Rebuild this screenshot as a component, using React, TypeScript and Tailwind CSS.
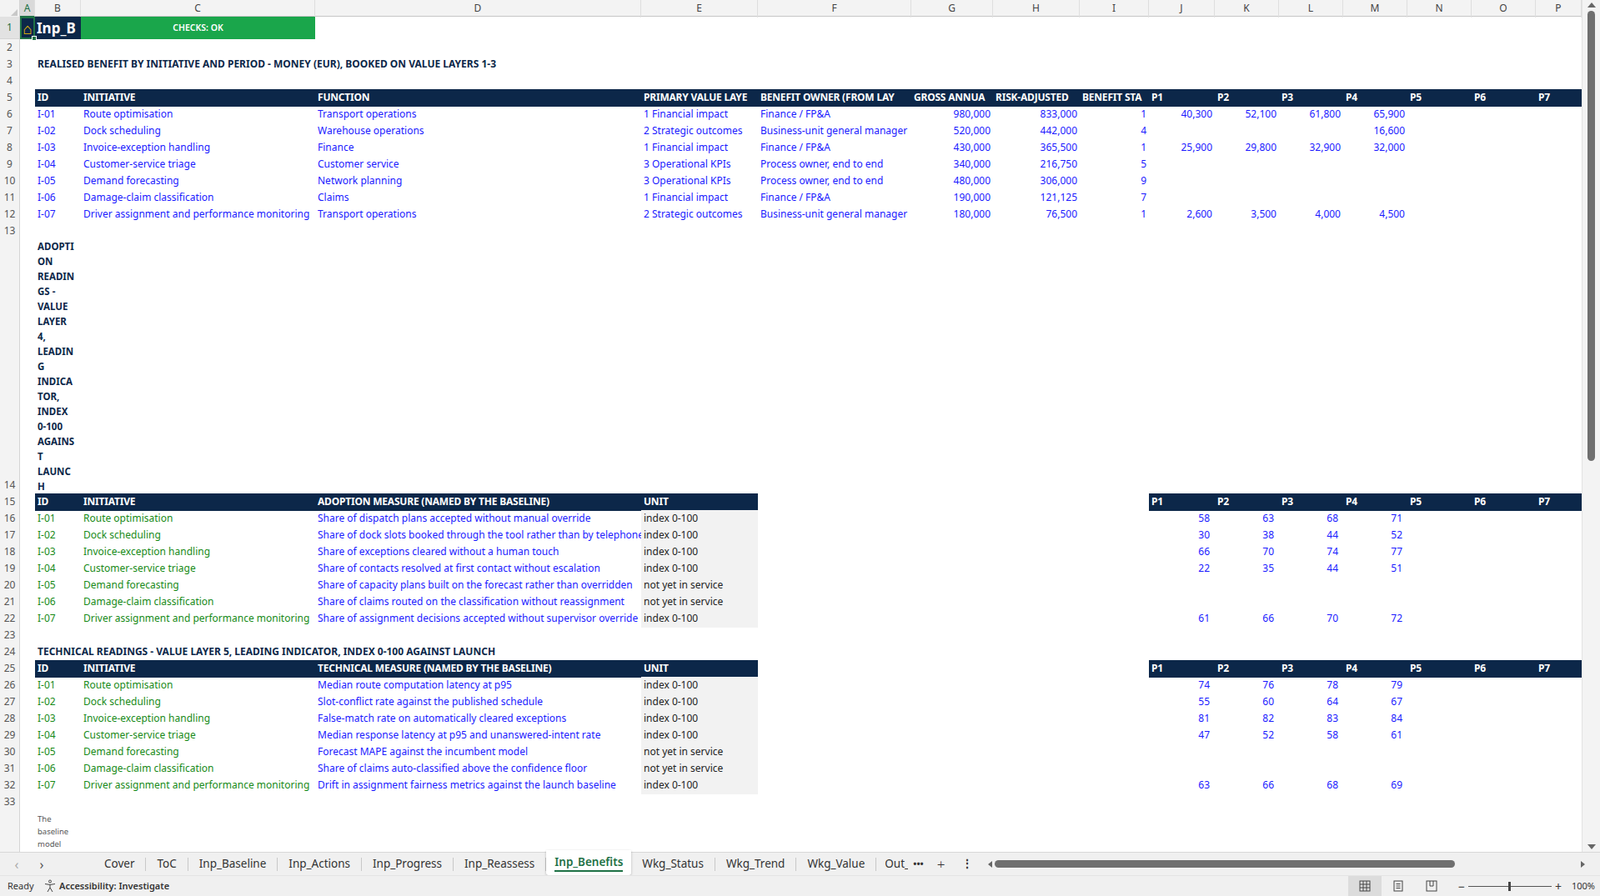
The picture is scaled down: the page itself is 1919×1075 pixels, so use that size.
import React from "react";

const GRID =
  "grid grid-cols-[24px_18px_55px_281px_391px_140px_184px_98px_104px_83px_79px_77px_77px_77px_77px_77px_55px]";
const BASE = "overflow-hidden whitespace-nowrap px-[3px] text-[12px] leading-[20px] font-['Lato',sans-serif]";
const HD = "overflow-hidden whitespace-nowrap px-[3px] bg-[#0c2749] text-white font-bold text-[11px] leading-[20px] font-['Open_Sans',sans-serif] tracking-[-0.2px]";
const BLUE = "text-[#1a1aff]";
const GREEN = "text-[#178a17]";
const UNIT = "bg-[#f2f2f2] text-[#222]";

type C = { t?: React.ReactNode; k?: string };

function RowNum({ n }: { n: string }) {
  return (
    <div className="flex items-end justify-center border-r border-b border-[#d4d4d4] bg-[#f3f3f3] text-[12px] leading-[20px] font-['Noto_Sans',sans-serif] text-[#555]">
      {n}
    </div>
  );
}

function Row({ n, cells, h = "h-[20px]" }: { n: string; cells: C[]; h?: string }) {
  const full: C[] = [...cells];
  while (full.length < 16) full.push({});
  return (
    <div className={`${GRID} ${h}`}>
      <RowNum n={n} />
      {full.map((c, i) => (
        <div key={i} className={`${BASE} ${c.k ?? ""}`}>
          {c.t}
        </div>
      ))}
    </div>
  );
}

const t1 = [
  ["I-01", "Route optimisation", "Transport operations", "1 Financial impact", "Finance / FP&A", "980,000", "833,000", "1", "40,300", "52,100", "61,800", "65,900"],
  ["I-02", "Dock scheduling", "Warehouse operations", "2 Strategic outcomes", "Business-unit general manager", "520,000", "442,000", "4", "", "", "", "16,600"],
  ["I-03", "Invoice-exception handling", "Finance", "1 Financial impact", "Finance / FP&A", "430,000", "365,500", "1", "25,900", "29,800", "32,900", "32,000"],
  ["I-04", "Customer-service triage", "Customer service", "3 Operational KPIs", "Process owner, end to end", "340,000", "216,750", "5", "", "", "", ""],
  ["I-05", "Demand forecasting", "Network planning", "3 Operational KPIs", "Process owner, end to end", "480,000", "306,000", "9", "", "", "", ""],
  ["I-06", "Damage-claim classification", "Claims", "1 Financial impact", "Finance / FP&A", "190,000", "121,125", "7", "", "", "", ""],
  ["I-07", "Driver assignment and performance monitoring", "Transport operations", "2 Strategic outcomes", "Business-unit general manager", "180,000", "76,500", "1", "2,600", "3,500", "4,000", "4,500"],
];

const ids = ["I-01", "I-02", "I-03", "I-04", "I-05", "I-06", "I-07"];
const inits = ["Route optimisation", "Dock scheduling", "Invoice-exception handling", "Customer-service triage", "Demand forecasting", "Damage-claim classification", "Driver assignment and performance monitoring"];
const adopt = [
  "Share of dispatch plans accepted without manual override",
  "Share of dock slots booked through the tool rather than by telephone",
  "Share of exceptions cleared without a human touch",
  "Share of contacts resolved at first contact without escalation",
  "Share of capacity plans built on the forecast rather than overridden",
  "Share of claims routed on the classification without reassignment",
  "Share of assignment decisions accepted without supervisor override",
];
const tech = [
  "Median route computation latency at p95",
  "Slot-conflict rate against the published schedule",
  "False-match rate on automatically cleared exceptions",
  "Median response latency at p95 and unanswered-intent rate",
  "Forecast MAPE against the incumbent model",
  "Share of claims auto-classified above the confidence floor",
  "Drift in assignment fairness metrics against the launch baseline",
];
const units = ["index 0-100", "index 0-100", "index 0-100", "index 0-100", "not yet in service", "not yet in service", "index 0-100"];
const aVals = [["58", "63", "68", "71"], ["30", "38", "44", "52"], ["66", "70", "74", "77"], ["22", "35", "44", "51"], [], [], ["61", "66", "70", "72"]];
const tVals = [["74", "76", "78", "79"], ["55", "60", "64", "67"], ["81", "82", "83", "84"], ["47", "52", "58", "61"], [], [], ["63", "66", "68", "69"]];

function periodHeads(): C[] {
  return ["P1", "P2", "P3", "P4", "P5", "P6", "P7"].map((p) => ({ t: p, k: HD }));
}

function SubTable({ start, measure, descs, vals }: { start: number; measure: string; descs: string[]; vals: string[][] }) {
  return (
    <>
      <Row
        n={String(start)}
        cells={[
          {},
          { t: "ID", k: HD },
          { t: "INITIATIVE", k: HD },
          { t: measure, k: HD },
          { t: "UNIT", k: HD },
          {}, {}, {}, {},
          ...periodHeads(),
        ]}
      />
      {ids.map((id, i) => (
        <Row
          key={id}
          n={String(start + 1 + i)}
          cells={[
            {},
            { t: id, k: GREEN },
            { t: inits[i], k: GREEN },
            { t: descs[i], k: BLUE },
            { t: units[i], k: UNIT },
            {}, {}, {}, {},
            ...[0, 1, 2, 3].map((j) => ({ t: vals[i][j] ?? "", k: `${BLUE} text-right pr-[6px]` })),
          ]}
        />
      ))}
    </>
  );
}

const colLetters = ["A", "B", "C", "D", "E", "F", "G", "H", "I", "J", "K", "L", "M", "N", "O", "P"];
const titleLines = ["ADOPTI", "ON", "READIN", "GS -", "VALUE", "LAYER", "4,", "LEADIN", "G", "INDICA", "TOR,", "INDEX", "0-100", "AGAINS", "T", "LAUNC", "H"];
const TITLE = "font-bold text-[11.5px] text-[#0c2749] font-['Open_Sans',sans-serif]";

export default function App() {
  return (
    <div className="w-[1919px] h-[1075px] flex flex-col bg-white overflow-hidden select-none">
      <div className="flex h-[1022px]">
        <div className="flex-1 overflow-hidden">
          <div className={`${GRID} h-[20px] bg-[#f3f3f3] border-b border-[#c6c6c6]`}>
            <div className="border-r border-[#d4d4d4] bg-[#f3f3f3] flex items-end justify-end">
              <div className="w-0 h-0 border-l-[8px] border-l-transparent border-b-[8px] border-b-[#c8c8c8] m-[2px]" />
            </div>
            {colLetters.map((l) => (
              <div
                key={l}
                className={`text-center text-[12px] leading-[19px] font-['Noto_Sans',sans-serif] border-r border-[#dedede] ${
                  l === "A" ? "bg-[#d9d9d9] text-[#1e7145] border-b-2 border-b-[#1e7145]" : "text-[#444]"
                }`}
              >
                {l}
              </div>
            ))}
          </div>
          <div className={`${GRID} h-[27px]`}>
            <div className="flex items-center justify-center border-r border-b border-[#d4d4d4] bg-[#e2e2e2] text-[12px] text-[#1e7145] font-['Noto_Sans',sans-serif]">1</div>
            <div className="relative bg-[#0c2749] border-2 border-[#1e7145] flex items-center justify-center text-[#f2c200] text-[18px] leading-none">
              ⌂
              <div className="absolute -right-[4px] -bottom-[4px] w-[6px] h-[6px] bg-[#1e7145] border border-white" />
            </div>
            <div className="bg-[#0c2749] text-white font-bold text-[17px] leading-[27px] pl-[2px] overflow-hidden whitespace-nowrap font-['Open_Sans',sans-serif]">
              Inp_B
            </div>
            <div className="bg-[#1aa64b] text-white text-[10.5px] font-semibold flex items-center justify-center font-['Open_Sans',sans-serif]">
              CHECKS: OK
            </div>
          </div>
          <Row n="2" cells={[]} />
          <Row
            n="3"
            cells={[{}, { t: "REALISED BENEFIT BY INITIATIVE AND PERIOD - MONEY (EUR), BOOKED ON VALUE LAYERS 1-3", k: `${TITLE} overflow-visible` }]}
          />
          <Row n="4" cells={[]} />
          <Row
            n="5"
            cells={[
              {},
              { t: "ID", k: HD },
              { t: "INITIATIVE", k: HD },
              { t: "FUNCTION", k: HD },
              { t: "PRIMARY VALUE LAYE", k: HD },
              { t: "BENEFIT OWNER (FROM LAY", k: HD },
              { t: "GROSS ANNUA", k: HD },
              { t: "RISK-ADJUSTED", k: HD },
              { t: "BENEFIT STA", k: HD },
              ...periodHeads(),
            ]}
          />
          {t1.map((r, i) => (
            <Row
              key={r[0]}
              n={String(6 + i)}
              cells={[
                {},
                { t: r[0], k: BLUE },
                { t: r[1], k: BLUE },
                { t: r[2], k: BLUE },
                { t: r[3], k: BLUE },
                { t: r[4], k: BLUE },
                { t: r[5], k: `${BLUE} text-right` },
                { t: r[6], k: `${BLUE} text-right` },
                { t: r[7], k: `${BLUE} text-right` },
                { t: r[8], k: `${BLUE} text-right` },
                { t: r[9], k: `${BLUE} text-right` },
                { t: r[10], k: `${BLUE} text-right` },
                { t: r[11], k: `${BLUE} text-right` },
              ]}
            />
          ))}
          <Row n="13" cells={[]} />
          <div className={`${GRID} h-[305px]`}>
            <RowNum n="14" />
            <div />
            <div className={`${TITLE} flex flex-col justify-end px-[3px] leading-[18px]`}>
              {titleLines.map((l, i) => (
                <div key={i} className="whitespace-nowrap">{l}</div>
              ))}
            </div>
          </div>
          <SubTable start={15} measure="ADOPTION MEASURE (NAMED BY THE BASELINE)" descs={adopt} vals={aVals} />
          <Row n="23" cells={[]} />
          <Row
            n="24"
            cells={[{}, { t: "TECHNICAL READINGS - VALUE LAYER 5, LEADING INDICATOR, INDEX 0-100 AGAINST LAUNCH", k: `${TITLE} overflow-visible` }]}
          />
          <SubTable start={25} measure="TECHNICAL MEASURE (NAMED BY THE BASELINE)" descs={tech} vals={tVals} />
          <Row n="33" cells={[]} />
          <div className={`${GRID} h-[60px]`}>
            <RowNum n="" />
            <div />
            <div className="px-[3px] pt-[3px] text-[9.5px] leading-[15px] text-[#555] font-['Noto_Sans',sans-serif]">
              The
              <br />
              baseline
              <br />
              model
            </div>
          </div>
        </div>
        <div className="w-[22px] bg-[#f3f3f3] border-l border-[#e2e2e2] flex flex-col items-center py-[3px]">
          <div className="w-0 h-0 border-l-[5px] border-r-[5px] border-b-[6px] border-l-transparent border-r-transparent border-b-[#666]" />
          <div className="w-[9px] h-[540px] mt-[4px] rounded-full bg-[#6f6f6f]" />
          <div className="flex-1" />
          <div className="w-0 h-0 border-l-[5px] border-r-[5px] border-t-[6px] border-l-transparent border-r-transparent border-t-[#666]" />
        </div>
      </div>
      <div className="h-[28px] bg-[#f0f0f0] border-t border-[#d8d8d8] flex items-center text-[13.5px] text-[#333] font-['Noto_Sans',sans-serif]">
        <span className="w-[40px] text-center text-[#aaa] text-[16px]">‹</span>
        <span className="w-[20px] text-center text-[#555] text-[16px]">›</span>
        <div className="w-[52px]" />
        {["Cover", "ToC", "Inp_Baseline", "Inp_Actions", "Inp_Progress", "Inp_Reassess"].map((t) => (
          <div key={t} className="flex items-center h-full">
            <span className="px-[13px]">{t}</span>
            <span className="w-px h-[16px] bg-[#c8c8c8]" />
          </div>
        ))}
        <div className="h-[30px] -mt-[4px] bg-white shadow-[0_1px_3px_rgba(0,0,0,0.25)] px-[10px] flex flex-col justify-center items-center rounded-b-[3px]">
          <span className="text-[#1e7145] font-semibold leading-[20px]">Inp_Benefits</span>
          <span className="h-[2px] w-full bg-[#1e7145]" />
        </div>
        {["Wkg_Status", "Wkg_Trend", "Wkg_Value"].map((t) => (
          <div key={t} className="flex items-center h-full">
            <span className="px-[13px]">{t}</span>
            <span className="w-px h-[16px] bg-[#c8c8c8]" />
          </div>
        ))}
        <span className="pl-[10px] w-[38px] overflow-hidden whitespace-nowrap">Out_</span>
        <span className="px-[6px] text-[11px] font-bold">•••</span>
        <span className="px-[10px] text-[17px] font-light">+</span>
        <span className="px-[10px] font-bold">⋮</span>
        <div className="flex-1 flex items-center px-[8px]">
          <div className="w-0 h-0 border-t-[4px] border-b-[4px] border-r-[5px] border-t-transparent border-b-transparent border-r-[#666]" />
          <div className="ml-[3px] w-[552px] h-[9px] rounded-full bg-[#6f6f6f]" />
          <div className="flex-1" />
          <div className="w-0 h-0 border-t-[4px] border-b-[4px] border-l-[5px] border-t-transparent border-b-transparent border-l-[#666] mr-[10px]" />
        </div>
      </div>
      <div className="h-[25px] bg-[#f0f0f0] border-t border-[#e4e4e4] flex items-center text-[11px] text-[#333] font-['Noto_Sans',sans-serif]">
        <span className="pl-[9px] w-[52px]">Ready</span>
        <svg width="16" height="16" viewBox="0 0 16 16" fill="none" stroke="#444" strokeWidth="1" className="mr-[3px]">
          <circle cx="8" cy="2.5" r="1.5" />
          <path d="M2 5.5 L8 6.5 L14 5.5 M8 6.5 V10 L5 15 M8 10 L11 15" />
        </svg>
        <span className="font-semibold">Accessibility: Investigate</span>
        <div className="flex-1" />
        <div className="w-[40px] h-[25px] bg-[#dcdcdc] flex items-center justify-center">
          <svg width="14" height="14" viewBox="0 0 14 14" fill="none" stroke="#444" strokeWidth="1">
            <rect x="1" y="1" width="12" height="12" />
            <path d="M5 1V13M9 1V13M1 5H13M1 9H13" />
          </svg>
        </div>
        <div className="w-[40px] flex justify-center">
          <svg width="14" height="14" viewBox="0 0 14 14" fill="none" stroke="#444" strokeWidth="1">
            <rect x="2" y="1" width="10" height="12" />
            <path d="M4.5 4.5H9.5M4.5 7H9.5M4.5 9.5H9.5" />
          </svg>
        </div>
        <div className="w-[40px] flex justify-center">
          <svg width="14" height="14" viewBox="0 0 14 14" fill="none" stroke="#444" strokeWidth="1">
            <rect x="1" y="1" width="12" height="12" />
            <path d="M5 1V7H9V1" />
          </svg>
        </div>
        <span className="ml-[12px] text-[14px]">−</span>
        <div className="relative w-[100px] h-px bg-[#555] mx-[4px]">
          <div className="absolute left-[48px] -top-[5px] w-[3px] h-[11px] bg-[#444]" />
        </div>
        <span className="text-[14px]">+</span>
        <span className="pl-[12px] pr-[6px]">100%</span>
      </div>
    </div>
  );
}
